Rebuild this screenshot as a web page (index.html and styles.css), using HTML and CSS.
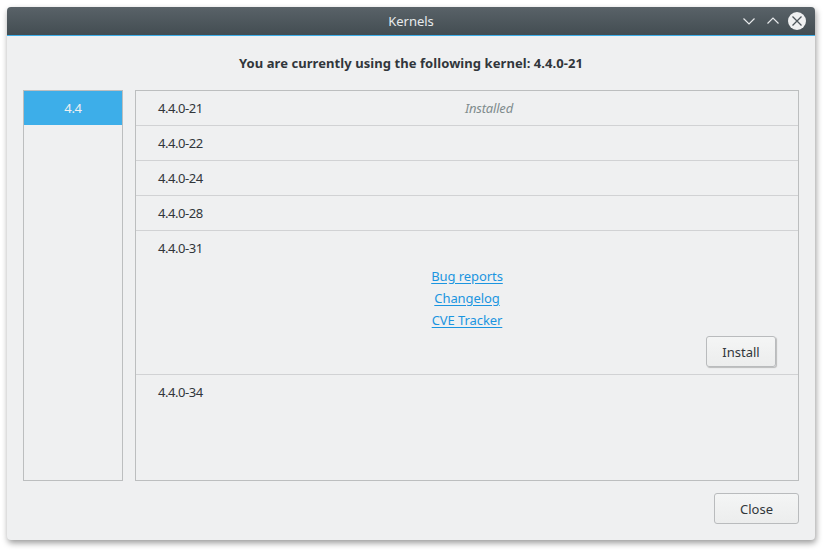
FILE: index.html
```html
<!DOCTYPE html>
<html lang="en">
<head>
    <meta charset="UTF-8">
    <title>Kernels</title>
    <link rel="stylesheet" href="styles.css">
</head>
<body>
    <div class="window">
        <div class="titlebar">
            <span class="title">Kernels</span>
            <div class="controls">
                <svg class="ctl down" width="14" height="10" viewBox="0 0 14 10"><path d="M1.500 2.500 7 8l5.500-5.500" fill="none" stroke="#e6e8ea" stroke-width="1.200"/></svg>
                <svg class="ctl up" width="14" height="10" viewBox="0 0 14 10"><path d="M1.500 7.500 7 2l5.500 5.500" fill="none" stroke="#e6e8ea" stroke-width="1.200"/></svg>
                <svg class="close-icon" width="18" height="18" viewBox="0 0 18 18"><circle cx="9" cy="9" r="9" fill="#eff0f1"/><path d="M4.500 4.500l9 9M13.500 4.500l-9 9" stroke="#4d565b" stroke-width="1.300"/></svg>
            </div>
        </div>
        <div class="content">
            <p class="heading">You are currently using the following kernel: 4.4.0-21</p>
            <div class="panes">
                <div class="groups">
                    <div class="group selected">4.4</div>
                </div>
                <div class="kernels">
                    <div class="row">
                        <span class="name">4.4.0-21</span>
                        <span class="status">Installed</span>
                    </div>
                    <div class="row"><span class="name">4.4.0-22</span></div>
                    <div class="row"><span class="name">4.4.0-24</span></div>
                    <div class="row"><span class="name">4.4.0-28</span></div>
                    <div class="row expanded">
                        <span class="name">4.4.0-31</span>
                        <div class="links">
                            <a href="#">Bug reports</a>
                            <a href="#">Changelog</a>
                            <a href="#">CVE Tracker</a>
                        </div>
                        <div class="actions">
                            <button class="btn install">Install</button>
                        </div>
                    </div>
                    <div class="row last"><span class="name">4.4.0-34</span></div>
                </div>
            </div>
            <div class="footer">
                <button class="btn close">Close</button>
            </div>
        </div>
    </div>
</body>
</html>
```
FILE: styles.css
```css
html, body {
    margin: 0;
    height: 100%;
    background: #fff;
    overflow: hidden;
}
body {
    font-family: "Noto Sans", sans-serif;
    font-size: 13px;
    color: #31363b;
    padding: 7px 0 0 7px;
    box-sizing: border-box;
}
.window {
    width: 808px;
    height: 533px;
    display: flex;
    flex-direction: column;
    background: #eff0f1;
    border-radius: 4px;
    box-shadow: 1px 3px 6px rgba(0,0,0,0.4);
    overflow: hidden;
}
.titlebar {
    height: 28px;
    flex: none;
    display: flex;
    align-items: center;
    justify-content: center;
    position: relative;
    background: linear-gradient(#596268, #434d52);
    border-bottom: 1px solid #3daee9;
    color: #e8eaec;
}
.controls {
    position: absolute;
    right: 9px;
    top: 5px;
    display: flex;
    align-items: center;
}
.ctl {
    display: block;
}
.up {
    margin: 0 8px 0 10px;
}
.close-icon {
    display: block;
}
.content {
    flex: 1;
    display: flex;
    flex-direction: column;
    padding: 0 16px 16px;
    min-height: 0;
}
.heading {
    margin: 0;
    height: 54px;
    line-height: 54px;
    text-align: center;
    font-weight: bold;
    letter-spacing: 0.07px;
}
.panes {
    height: 391px;
    display: flex;
    gap: 12px;
}
.groups {
    width: 98px;
    border: 1px solid #bcbebf;
}
.group {
    height: 34px;
    line-height: 34px;
    text-align: center;
    letter-spacing: -0.3px;
}
.group.selected {
    background: #3daee9;
    color: #eff0f1;
}
.kernels {
    flex: 1;
    border: 1px solid #bcbebf;
}
.row {
    height: 34px;
    line-height: 34px;
    padding: 0 22px;
    border-bottom: 1px solid #d1d2d4;
    position: relative;
}
.row.expanded {
    height: 143px;
}
.row.last {
    border-bottom: none;
}
.name {
    letter-spacing: -0.45px;
}
.status {
    position: absolute;
    left: 329px;
    top: 0;
    font-style: italic;
    color: #7f8c8d;
    letter-spacing: -0.2px;
}
.links {
    display: flex;
    flex-direction: column;
    align-items: center;
    line-height: 22px;
    letter-spacing: -0.08px;
}
.links a {
    color: #1b95e0;
    text-underline-offset: 2px;
}
.actions {
    display: flex;
    justify-content: flex-end;
    margin-top: 5px;
}
.btn {
    font-family: inherit;
    font-size: 13px;
    color: #31363b;
    border: 1px solid #b9bbbd;
    border-radius: 3px;
    background: linear-gradient(#f4f5f5, #eceded);
    padding: 0;
}
.install {
    width: 70px;
    height: 31px;
    box-shadow: 1px 1px 1px rgba(0,0,0,0.22);
}
.footer {
    display: flex;
    justify-content: flex-end;
    margin-top: 12px;
}
.close {
    width: 85px;
    height: 31px;
}
```
